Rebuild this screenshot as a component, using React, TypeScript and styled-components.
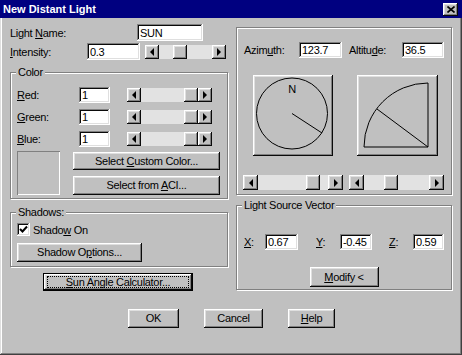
import React from "react";
import styled, { createGlobalStyle } from "styled-components";

const GlobalStyle = createGlobalStyle`
  html, body {
    margin: 0;
    padding: 0;
    background: #c0c0c0;
  }
  body {
    font-family: "Liberation Sans", Arial, sans-serif;
    font-size: 11px;
    letter-spacing: -0.3px;
    color: #000;
  }
  * {
    box-sizing: border-box;
  }
`;

const raised = `
  background: #c0c0c0;
  box-shadow: inset -1px -1px #0a0a0a, inset 1px 1px #ffffff, inset -2px -2px #808080, inset 2px 2px #dfdfdf;
`;

const sunken = `
  background: #ffffff;
  box-shadow: inset -1px -1px #ffffff, inset 1px 1px #808080, inset -2px -2px #dfdfdf, inset 2px 2px #0a0a0a;
`;

const Window = styled.div`
  width: 462px;
  height: 355px;
  background: #c0c0c0;
  box-shadow: inset -1px -1px #404040, inset 1px 0 #dfdfdf, inset -2px -2px #808080, inset 2px 0 #ffffff;
  display: flex;
  flex-direction: column;
  overflow: hidden;
`;

const TitleBar = styled.div`
  height: 18px;
  background: #000080;
  display: flex;
  align-items: center;
  justify-content: space-between;
  padding: 0 4px 0 3px;

  span {
    color: #ffffff;
    font-weight: bold;
    font-size: 11px;
    letter-spacing: 0;
  }
`;

const CloseBtn = styled.div`
  ${raised}
  width: 15px;
  height: 13px;
  display: flex;
  align-items: center;
  justify-content: center;
`;

const Main = styled.div`
  display: flex;
  gap: 8px;
  padding-left: 10px;
`;

const LeftCol = styled.div`
  width: 218px;
  display: flex;
  flex-direction: column;
`;

const RightCol = styled.div`
  width: 216px;
  margin-top: 9px;
  display: flex;
  flex-direction: column;
`;

const Row = styled.div<{ $top?: number; $inset?: number; $gap?: number }>`
  display: flex;
  align-items: center;
  margin-top: ${p => p.$top ?? 0}px;
  padding-left: ${p => p.$inset ?? 0}px;
  gap: ${p => p.$gap ?? 0}px;
`;

const Label = styled.label<{ $w: number }>`
  width: ${p => p.$w}px;
  flex: none;
  white-space: nowrap;
`;

const TextBox = styled.input<{ $w: number; $h?: number }>`
  ${sunken}
  width: ${p => p.$w}px;
  height: ${p => p.$h ?? 16}px;
  flex: none;
  border: none;
  outline: none;
  padding: 0 0 0 3px;
  margin: 0;
  font: inherit;
  letter-spacing: inherit;
  color: #000;
`;

const Group = styled.div<{ $top?: number; $h: number; $pad: string }>`
  position: relative;
  margin-top: ${p => p.$top ?? 0}px;
  height: ${p => p.$h}px;
  padding: ${p => p.$pad};
  border: 1px solid #808080;
  box-shadow: inset 1px 1px #ffffff, 1px 1px #ffffff;
  display: flex;
  flex-direction: column;
`;

const Legend = styled.span`
  position: absolute;
  top: -7px;
  left: 5px;
  padding: 0 2px;
  background: #c0c0c0;
  line-height: 13px;
`;

const ScrollBar = styled.div<{ $w: number; $h: number; $left?: number }>`
  display: flex;
  flex: none;
  width: ${p => p.$w}px;
  height: ${p => p.$h}px;
  margin-left: ${p => p.$left ?? 0}px;
`;

const ScrollArrow = styled.div<{ $h: number }>`
  ${raised}
  width: ${p => p.$h}px;
  height: 100%;
  flex: none;
  display: flex;
  align-items: center;
  justify-content: center;
`;

const Tri = styled.span<{ $dir: "left" | "right" }>`
  width: 0;
  height: 0;
  border-top: 4px solid transparent;
  border-bottom: 4px solid transparent;
  ${p => (p.$dir === "left" ? "border-right: 4px solid #000;" : "border-left: 4px solid #000;")}
`;

const Track = styled.div`
  flex: 1;
  display: flex;
  background: #e2e2e2;
`;

const Spacer = styled.div<{ $grow: number }>`
  flex: ${p => p.$grow} 1 0;
`;

const Thumb = styled.div`
  ${raised}
  width: 14px;
  flex: none;
`;

const Button = styled.div<{ $w: number; $h: number; $left?: number; $top?: number; $default?: boolean }>`
  ${raised}
  position: relative;
  width: ${p => p.$w}px;
  height: ${p => p.$h}px;
  line-height: ${p => p.$h}px;
  margin-left: ${p => p.$left ?? 0}px;
  margin-top: ${p => p.$top ?? 0}px;
  flex: none;
  text-align: center;
  white-space: nowrap;
  ${p =>
    p.$default &&
    `
    box-shadow: inset 0 0 0 1px #000, inset -2px -2px #0a0a0a, inset 2px 2px #ffffff, inset -3px -3px #808080, inset 3px 3px #dfdfdf;
    &::after {
      content: "";
      position: absolute;
      inset: 3px 4px;
      border: 1px dotted #000;
    }
  `}
`;

const ColorRows = styled.div`
  display: flex;
  flex-direction: column;
  gap: 6px;
`;

const Swatch = styled.div`
  width: 43px;
  height: 44px;
  flex: none;
  background: #c0c0c0;
  box-shadow: inset 1px 1px #808080, inset -1px -1px #ffffff;
`;

const ButtonStack = styled.div`
  display: flex;
  flex-direction: column;
  gap: 6px;
  margin-left: 13px;
  padding-top: 1px;
`;

const CheckBox = styled.div`
  ${sunken}
  width: 13px;
  height: 13px;
  flex: none;
  display: flex;
  align-items: center;
  justify-content: center;
`;

const Diagram = styled.div<{ $w: number }>`
  ${raised}
  width: ${p => p.$w}px;
  height: 81px;
  flex: none;

  svg {
    display: block;
  }
`;

const Footer = styled.div`
  display: flex;
  gap: 25px;
  padding-left: 128px;
  margin-top: 18px;
`;

const Scroll = ({ w, h, pos, left }: { w: number; h: number; pos: number; left?: number }) => (
  <ScrollBar $w={w} $h={h} $left={left}>
    <ScrollArrow $h={h}><Tri $dir="left" /></ScrollArrow>
    <Track>
      <Spacer $grow={pos} />
      <Thumb />
      <Spacer $grow={1 - pos} />
    </Track>
    <ScrollArrow $h={h}><Tri $dir="right" /></ScrollArrow>
  </ScrollBar>
);

const colorRows = [
  { key: "R", rest: "ed:" },
  { key: "G", rest: "reen:" },
  { key: "B", rest: "lue:" },
];

export default function App() {
  return (
    <>
      <GlobalStyle />
      <Window>
        <TitleBar>
          <span>New Distant Light</span>
          <CloseBtn>
            <svg width="8" height="7" viewBox="0 0 8 7">
              <path d="M0.5 0.5 L7.5 6.5 M7.5 0.5 L0.5 6.5" stroke="#000" strokeWidth="1.6" />
            </svg>
          </CloseBtn>
        </TitleBar>

        <Main>
          <LeftCol>
            <Row $top={6}>
              <Label $w={127}>Light <u>N</u>ame:</Label>
              <TextBox $w={66} $h={17} defaultValue="SUN" />
            </Row>
            <Row $top={2}>
              <Label $w={77}><u>I</u>ntensity:</Label>
              <TextBox $w={53} $h={17} defaultValue="0.3" />
              <Scroll w={81} h={14} pos={0.37} left={5} />
            </Row>

            <Group $top={12} $h={127} $pad="14px 0 3px 6px">
              <Legend>Color</Legend>
              <ColorRows>
                {colorRows.map(c => (
                  <Row key={c.key}>
                    <Label $w={62}><u>{c.key}</u>{c.rest}</Label>
                    <TextBox $w={31} defaultValue="1" />
                    <Scroll w={85} h={14} pos={1} left={17} />
                  </Row>
                ))}
              </ColorRows>
              <Row $top={4} style={{ alignItems: "flex-start" }}>
                <Swatch />
                <ButtonStack>
                  <Button $w={147} $h={18}>Select <u>C</u>ustom Color...</Button>
                  <Button $w={147} $h={19}>Select from <u>A</u>CI...</Button>
                </ButtonStack>
              </Row>
            </Group>

            <Group $top={13} $h={55} $pad="10px 0 4px 6px">
              <Legend>Shadows:</Legend>
              <Row $gap={3}>
                <CheckBox>
                  <svg width="9" height="9" viewBox="0 0 9 9">
                    <path d="M1 4 L3.5 6.5 L8 1.5" fill="none" stroke="#000" strokeWidth="2" />
                  </svg>
                </CheckBox>
                <span>Shado<u>w</u> On</span>
              </Row>
              <Button $w={125} $h={19} $top={7}>Shadow O<u>p</u>tions...</Button>
            </Group>

            <Button $w={150} $h={18} $left={33} $top={6} $default>
              <u>S</u>un Angle Calculator...
            </Button>
          </LeftCol>

          <RightCol>
            <Group $h={168} $pad="14px 0 4px 0">
              <Row $inset={7}>
                <Label $w={55}>Azim<u>u</u>th:</Label>
                <TextBox $w={43} defaultValue="123.7" />
                <Label $w={53} style={{ marginLeft: 7 }}>Altitu<u>d</u>e:</Label>
                <TextBox $w={42} defaultValue="36.5" />
              </Row>
              <Row $top={17} $inset={16} $gap={24}>
                <Diagram $w={80}>
                  <svg width="80" height="81" viewBox="0 0 80 81">
                    <circle cx="39" cy="38.5" r="35.5" fill="none" stroke="#000" strokeWidth="1" />
                    <text x="39" y="18" fontSize="11" textAnchor="middle" fontFamily="Liberation Sans, Arial, sans-serif">N</text>
                    <line x1="39" y1="38.5" x2="69" y2="58" stroke="#000" strokeWidth="1" />
                  </svg>
                </Diagram>
                <Diagram $w={81}>
                  <svg width="81" height="81" viewBox="0 0 81 81">
                    <path d="M71 8 L71 72 L7 72 A64 64 0 0 1 71 8" fill="none" stroke="#000" strokeWidth="1" />
                    <line x1="71" y1="72" x2="20" y2="34" stroke="#000" strokeWidth="1" />
                  </svg>
                </Diagram>
              </Row>
              <Row $top={19} $inset={6} $gap={6}>
                <Scroll w={100} h={15} pos={0.86} />
                <Scroll w={95} h={15} pos={0.4} />
              </Row>
            </Group>

            <Group $top={10} $h={85} $pad="28px 0 2px 0">
              <Legend>Light Source Vector</Legend>
              <Row $inset={7}>
                <Label $w={21}><u>X</u>:</Label>
                <TextBox $w={33} defaultValue="0.67" />
                <Label $w={24} style={{ marginLeft: 18 }}><u>Y</u>:</Label>
                <TextBox $w={32} defaultValue="-0.45" />
                <Label $w={24} style={{ marginLeft: 17 }}><u>Z</u>:</Label>
                <TextBox $w={31} defaultValue="0.59" />
              </Row>
              <Row $top={17} style={{ justifyContent: "center" }}>
                <Button $w={69} $h={20}><u>M</u>odify &lt;</Button>
              </Row>
            </Group>
          </RightCol>
        </Main>

        <Footer>
          <Button $w={51} $h={19}>OK</Button>
          <Button $w={59} $h={19}>Cancel</Button>
          <Button $w={47} $h={19}><u>H</u>elp</Button>
        </Footer>
      </Window>
    </>
  );
}
